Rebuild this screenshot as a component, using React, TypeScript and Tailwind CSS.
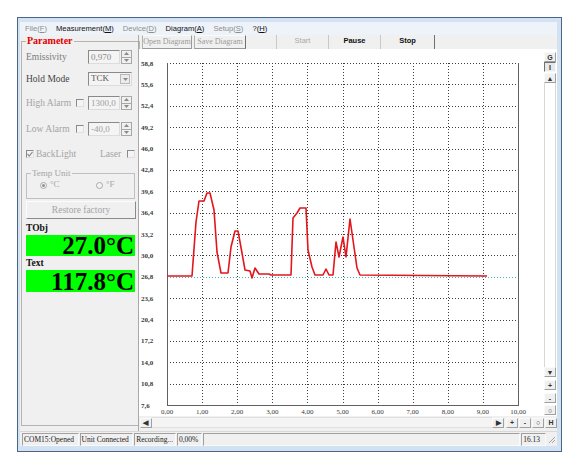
import React from "react";

const SERIF = "font-['Liberation_Serif',serif]";
const SANS = "font-['Liberation_Sans',sans-serif]";

// curve in window pixels, mapped into the chart svg below
const CURVE: [number, number][] = [
  [166, 276], [191, 276], [195, 222], [198, 201], [203, 201], [206, 193], [209, 193],
  [213, 210], [216, 252], [220, 273], [227, 273], [230, 247], [234, 231], [237, 231],
  [241, 253], [244, 270], [249, 271], [251, 278], [254, 268], [258, 274], [268, 274],
  [270, 275], [290, 275], [292, 218], [296, 213], [299, 208], [305, 208], [307, 250],
  [311, 267], [314, 275], [322, 275], [325, 269], [328, 275], [332, 275], [335, 242],
  [338, 257], [342, 237], [345, 257], [349, 219], [352, 240], [356, 268], [359, 275],
  [486, 276],
];

const OX = 138;
const OY = 49;
const PL = 28;
const PT = 14;
const PW = 351;
const PH = 342;

function Spin() {
  return (
    <div className="w-[11px] h-[14px] border border-[#a8a8a8] bg-[#f0f0f0] flex flex-col ml-[1px]">
      <div className="flex-1 border-b border-[#a8a8a8] flex items-center justify-center">
        <svg width="5" height="3" viewBox="0 0 5 3">
          <path d="M2.5 0L5 3H0z" fill="#8a8a8a" />
        </svg>
      </div>
      <div className="flex-1 flex items-center justify-center">
        <svg width="5" height="3" viewBox="0 0 5 3">
          <path d="M0 0H5L2.5 3z" fill="#8a8a8a" />
        </svg>
      </div>
    </div>
  );
}

function Field({ value, dim }: { value: string; dim?: boolean }) {
  return (
    <div
      className={`w-[32px] h-[14px] border border-t-[#8a8a8a] border-l-[#8a8a8a] border-b-[#dcdcdc] border-r-[#dcdcdc] bg-[#f4f4f4] pl-[2px] text-[9px] leading-[12px] ${
        dim ? "text-[#a0a0a0]" : "text-[#8a8a8a]"
      }`}
    >
      {value}
    </div>
  );
}

function Check({ checked }: { checked?: boolean }) {
  return (
    <div className="w-[8px] h-[8px] border border-t-[#8a8a8a] border-l-[#8a8a8a] border-b-[#e0e0e0] border-r-[#e0e0e0] bg-[#f4f4f4] flex items-center justify-center">
      {checked && (
        <svg width="6" height="6" viewBox="0 0 6 6">
          <path d="M0.5 3L2.3 5L5.5 0.8" fill="none" stroke="#909090" strokeWidth="1.2" />
        </svg>
      )}
    </div>
  );
}

function Radio({ on }: { on?: boolean }) {
  return (
    <div className="w-[7px] h-[7px] rounded-full border border-[#a8a8a8] bg-[#f4f4f4] flex items-center justify-center">
      {on && <div className="w-[3px] h-[3px] rounded-full bg-[#909090]" />}
    </div>
  );
}

function SBtn({ children, sunk }: { children: React.ReactNode; sunk?: boolean }) {
  return (
    <div
      className={`w-[12px] h-[10px] flex items-center justify-center border text-[7px] leading-none font-bold text-[#333] ${SANS} ${
        sunk
          ? "border-t-[#707070] border-l-[#707070] border-b-[#f8f8f8] border-r-[#f8f8f8] bg-[#e8e8e8]"
          : "border-t-[#fafafa] border-l-[#fafafa] border-b-[#a0a0a0] border-r-[#a0a0a0] bg-[#f0f0f0]"
      }`}
    >
      {children}
    </div>
  );
}

function Chart() {
  const gx = (i: number) => PL + (PW * i) / 10;
  const gy = (j: number) => PT + (PH * j) / 16;
  const path = CURVE.map(([x, y], i) => `${i ? "L" : "M"}${x - OX} ${y - OY}`).join(" ");
  return (
    <svg width="405" height="367" viewBox="0 0 405 367" className="block">
      {Array.from({ length: 16 }, (_, j) => (
        <line
          key={"h" + j}
          x1={PL}
          x2={PL + PW}
          y1={Math.round(gy(j)) + 0.5}
          y2={Math.round(gy(j)) + 0.5}
          stroke={j === 10 ? "#3fb3b3" : "#3c3c3c"}
          strokeDasharray="1 2"
          shapeRendering="crispEdges"
        />
      ))}
      {Array.from({ length: 9 }, (_, i) => (
        <line
          key={"v" + i}
          x1={Math.round(gx(i + 1)) + 0.5}
          x2={Math.round(gx(i + 1)) + 0.5}
          y1={PT}
          y2={PT + PH}
          stroke="#3c3c3c"
          strokeDasharray="1 2"
          shapeRendering="crispEdges"
        />
      ))}
      <path
        d={`M${PL + 0.5} ${PT} V${PT + PH + 0.5} H${PL + PW + 0.5} V${PT}`}
        fill="none"
        stroke="#606060"
        strokeWidth="1"
        shapeRendering="crispEdges"
      />
      <path d={path} fill="none" stroke="#e3161c" strokeWidth="1.6" strokeLinejoin="round" />
      {Array.from({ length: 17 }, (_, j) => (
        <text
          key={"yl" + j}
          x={2}
          y={gy(j) + 2.5}
          fontSize="7"
          fontWeight="bold"
          fill="#3a3a3a"
          fontFamily="Liberation Serif, serif"
        >
          {(58.8 - 3.2 * j).toFixed(1).replace(".", ",")}
        </text>
      ))}
      {Array.from({ length: 11 }, (_, i) => (
        <text
          key={"xl" + i}
          x={gx(i)}
          y={PT + PH + 9}
          fontSize="7"
          textAnchor="middle"
          fill="#3a3a3a"
          fontFamily="Liberation Serif, serif"
        >
          {i.toFixed(2).replace(".", ",")}
        </text>
      ))}
    </svg>
  );
}

function Menu({ label, k, dim }: { label: string; k: string; dim?: boolean }) {
  return (
    <span className={dim ? "text-[#8d8d8d]" : "text-[#111]"}>
      {label}(<span className="underline">{k}</span>)
    </span>
  );
}

function StatusCell({ children, w }: { children?: React.ReactNode; w: string }) {
  return (
    <div
      className={`${w} h-[13px] border border-t-[#a0a0a0] border-l-[#a0a0a0] border-b-[#fafafa] border-r-[#fafafa] px-[1px] text-[7.5px] leading-[11px] text-[#222] whitespace-nowrap overflow-hidden mr-[1px]`}
    >
      {children}
    </div>
  );
}

export default function App() {
  return (
    <div className="w-[580px] h-[470px] bg-white pt-[17px] pl-[17px]">
      <div className="w-[545px] h-[435px] border border-[#4a6585] bg-[#d3e2f2] pl-[2px] pr-[4px] pt-[4px] pb-[5px] flex flex-col">
        {/* menu */}
        <div className={`h-[13px] bg-[#eef3fa] flex items-center gap-[9px] pl-[5px] text-[7.6px] ${SANS}`}>
          <Menu label="File" k="F" dim />
          <Menu label="Measurement" k="M" />
          <Menu label="Device" k="D" dim />
          <Menu label="Diagram" k="A" />
          <Menu label="Setup" k="S" dim />
          <Menu label="?" k="H" />
        </div>

        <div className="h-[396px] flex bg-[#f0f0f0]">
          {/* left panel */}
          <div className={`w-[118px] h-full pl-[1px] pr-[1px] pb-[2px] ${SERIF}`}>
            <fieldset className="h-[391px] border border-[#b4b4b4] pl-[4px] pr-[3px]">
              <legend className="px-[1px] text-[10px] leading-[12px] font-bold text-[#e00000]">Parameter</legend>
              <div className="flex flex-col text-[9.5px]">
                <div className="h-[14px] mt-[3px] flex items-center">
                  <span className="w-[62px] text-[#7a7a7a]">Emissivity</span>
                  <Field value="0,970" />
                  <Spin />
                </div>
                <div className="h-[14px] mt-[8px] flex items-center">
                  <span className="w-[62px] text-[#454545]">Hold Mode</span>
                  <div className="w-[44px] h-[14px] border border-t-[#8a8a8a] border-l-[#8a8a8a] border-b-[#dcdcdc] border-r-[#dcdcdc] bg-[#f4f4f4] flex items-center">
                    <span className="flex-1 pl-[2px] text-[9px] text-[#555]">TCK</span>
                    <div className="w-[10px] h-[10px] mr-[1px] border border-[#b8b8b8] bg-[#ececec] flex items-center justify-center">
                      <svg width="5" height="3" viewBox="0 0 5 3">
                        <path d="M0 0H5L2.5 3z" fill="#8a8a8a" />
                      </svg>
                    </div>
                  </div>
                </div>
                <div className="h-[14px] mt-[10px] flex items-center">
                  <span className="w-[50px] text-[#a4a4a4]">High Alarm</span>
                  <Check />
                  <span className="w-[4px]" />
                  <Field value="1300,0" dim />
                  <Spin />
                </div>
                <div className="h-[14px] mt-[12px] flex items-center">
                  <span className="w-[50px] text-[#a4a4a4]">Low Alarm</span>
                  <Check />
                  <span className="w-[4px]" />
                  <Field value="-40,0" dim />
                  <Spin />
                </div>
                <div className="h-[12px] mt-[12px] flex items-center text-[#a4a4a4]">
                  <Check checked />
                  <span className="ml-[2px] w-[64px]">BackLight</span>
                  <span className="w-[27px]">Laser</span>
                  <Check />
                </div>
                <fieldset className="mt-[9px] w-[109px] h-[30px] border border-[#c0c0c0] pl-[4px]">
                  <legend className="px-[1px] text-[9px] leading-[9px] text-[#a4a4a4]">Temp Unit</legend>
                  <div className="flex items-center h-[14px] pl-[9px] text-[9px] text-[#a8a8a8]">
                    <Radio on />
                    <span className="ml-[3px] w-[46px]">°C</span>
                    <Radio />
                    <span className="ml-[3px]">°F</span>
                  </div>
                </fieldset>
                <div className="mt-[2px] w-[110px] h-[18px] border border-t-[#fcfcfc] border-l-[#fcfcfc] border-b-[#8a8a8a] border-r-[#8a8a8a] flex items-center justify-center text-[9.5px] text-[#a4a4a4]">
                  Restore factory
                </div>
                <div className="h-[13px] mt-[3px] text-[9.5px] font-bold text-[#111] leading-[13px]">TObj</div>
                <div className="w-[109px] h-[21px] bg-[#00ff00] text-right text-[25px] leading-[22px] font-bold text-black pr-[1px]">
                  27.0°C
                </div>
                <div className="h-[13px] mt-[1px] text-[9.5px] font-bold text-[#111] leading-[13px]">Text</div>
                <div className="w-[109px] h-[22px] bg-[#00ff00] text-right text-[25px] leading-[23px] font-bold text-black pr-[1px]">
                  117.8°C
                </div>
              </div>
            </fieldset>
          </div>

          {/* chart side */}
          <div className="w-[419px] h-full flex flex-col border-l border-[#a8a8a8]">
            <div className={`h-[14px] flex text-[8px] leading-[12px] ${SERIF}`}>
              <div className="ml-[3px] w-[50px] border border-t-[#fafafa] border-l-[#b0b0b0] border-b-[#9a9a9a] border-r-[#9a9a9a] text-center text-[#9a9a9a]">
                Open Diagram
              </div>
              <div className="ml-[2px] w-[52px] border border-t-[#fafafa] border-l-[#b0b0b0] border-b-[#9a9a9a] border-r-[#707070] text-center text-[#9a9a9a]">
                Save Diagram
              </div>
              <div className={`ml-[30px] w-[52px] border-l border-[#c8c8c8] text-center text-[#a8a8a8] ${SANS} text-[7.5px]`}>Start</div>
              <div className={`w-[52px] border-l border-[#c8c8c8] text-center font-bold text-[#111] ${SANS} text-[7.5px]`}>Pause</div>
              <div className={`w-[55px] border-l border-r border-l-[#c8c8c8] border-r-[#707070] text-center font-bold text-[#111] ${SANS} text-[7.5px]`}>Stop</div>
            </div>
            <div className="h-[367px] flex">
              <div className="w-[404px] h-full bg-white overflow-hidden">
                <Chart />
              </div>
              <div className="w-[14px] h-full bg-white flex flex-col items-center pt-[3px]">
                <SBtn>G</SBtn>
                <SBtn sunk>I</SBtn>
                <div className="mt-[1px]">
                  <SBtn>▲</SBtn>
                </div>
                <div className="w-[12px] flex-1 border-x border-[#d8d8d8] bg-white" />
                <SBtn>▼</SBtn>
                <div className="mt-[3px]">
                  <SBtn>+</SBtn>
                </div>
                <div className="mt-[3px]">
                  <SBtn>-</SBtn>
                </div>
                <div className="mt-[2px] mb-[1px]">
                  <SBtn>○</SBtn>
                </div>
              </div>
            </div>
            <div className="h-[13px] flex items-center pl-[1px] bg-[#f0f0f0]">
              <SBtn>◀</SBtn>
              <div className="w-[344px] h-[11px] bg-[#f4f4f4] border-y border-[#e0e0e0]" />
              <SBtn>▶</SBtn>
              <div className="ml-[2px]">
                <SBtn>+</SBtn>
              </div>
              <div className="ml-[1px]">
                <SBtn>-</SBtn>
              </div>
              <div className="ml-[1px]">
                <SBtn>○</SBtn>
              </div>
              <div className="ml-[1px]">
                <SBtn>H</SBtn>
              </div>
            </div>
          </div>
        </div>

        {/* status bar */}
        <div className={`h-[15px] flex items-center pl-[2px] bg-[#f0f0f0] border-t border-[#d8d8d8] ${SERIF}`}>
          <StatusCell w="w-[57px]">COM15:Opened</StatusCell>
          <StatusCell w="w-[54px]">Unit Connected</StatusCell>
          <StatusCell w="w-[42px]">Recording...</StatusCell>
          <StatusCell w="w-[25px]">0,00%</StatusCell>
          <StatusCell w="w-[320px]" />
          <StatusCell w="w-[25px]">16.13</StatusCell>
          <svg width="9" height="9" viewBox="0 0 9 9" className="ml-auto mr-[1px]">
            <path d="M8 2L2 8M8 5L5 8" stroke="#a0a0a0" strokeWidth="1" />
          </svg>
        </div>
      </div>
    </div>
  );
}
